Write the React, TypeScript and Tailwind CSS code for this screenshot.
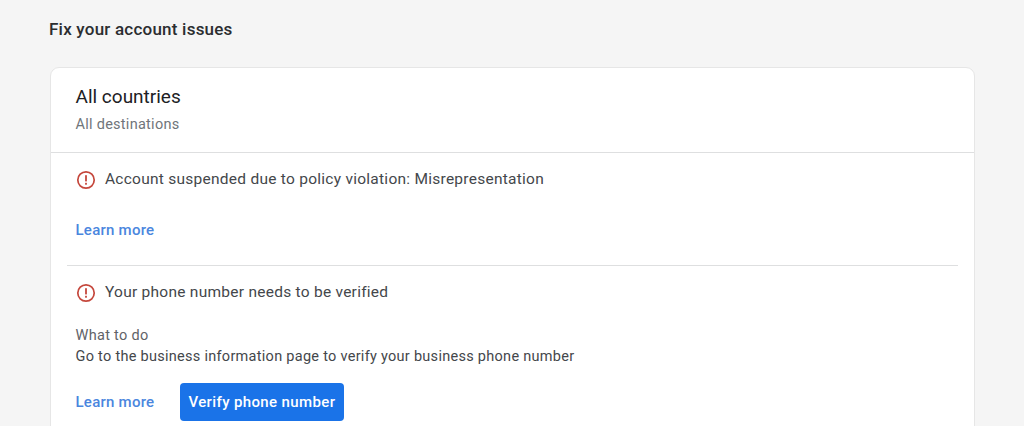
import React from "react";

function AlertIcon() {
  return (
    <svg width="20" height="20" viewBox="0 0 20 20" fill="none" className="shrink-0">
      <circle cx="10" cy="10" r="8.2" stroke="#c5473c" strokeWidth="1.7" />
      <rect x="9.1" y="5.2" width="1.8" height="6.2" fill="#c5473c" />
      <rect x="9.1" y="12.8" width="1.8" height="1.9" fill="#c5473c" />
    </svg>
  );
}

export default function App() {
  return (
    <div className="h-[426px] w-[1024px] overflow-hidden bg-[#f5f5f5] font-['Roboto',sans-serif]">
      <h1 className="pl-[49px] pt-[18px] text-[17px] leading-[22px] font-medium tracking-[0.22px] text-[#2b2d30]">Fix your account issues</h1>
      <div className="ml-[50px] mt-[27px] h-[400px] w-[925px] rounded-t-[9px] border border-[#e6e6e6] bg-white">
        <div className="h-[85px] border-b border-[#dedfe0] pl-[24.5px] pt-[17px]">
          <div className="text-[19px] leading-[24px] text-[#202124]">All countries</div>
          <div className="mt-[6px] text-[14.5px] leading-[20px] tracking-[0.27px] text-[#70757a]">All destinations</div>
        </div>
        <div className="mx-[16px] h-[113px] border-b border-[#dedfe0] pl-[9px] pt-[16px]">
          <div className="flex items-center gap-[9px]">
            <AlertIcon />
            <span className="pb-[2px] text-[15.5px] leading-[20px] tracking-[0.26px] text-[#44474b]">Account suspended due to policy violation: Misrepresentation</span>
          </div>
          <div className="mt-[28px] -ml-[0.5px] text-[15px] leading-[22px] font-medium tracking-[0.25px] text-[#4a86de]">Learn more</div>
        </div>
        <div className="pl-[24.5px] pt-[16px]">
          <div className="flex items-center gap-[9.5px]">
            <AlertIcon />
            <span className="pb-[2px] text-[15.5px] leading-[20px] tracking-[0.26px] text-[#44474b]">Your phone number needs to be verified</span>
          </div>
          <div className="mt-[21px] text-[14.5px] leading-[21px] tracking-[0.3px] text-[#5f6368]">What to do</div>
          <div className="text-[14.5px] leading-[21px] tracking-[0.28px] text-[#44474b]">Go to the business information page to verify your business phone number</div>
          <div className="mt-[16px] flex items-center gap-[25.5px]">
            <span className="text-[15px] font-medium tracking-[0.25px] text-[#4a86de]">Learn more</span>
            <button className="flex h-[38px] w-[164px] items-center justify-center rounded-[4px] bg-[#1a73e8] text-[15px] font-medium tracking-[0.37px] text-white">Verify phone number</button>
          </div>
        </div>
      </div>
    </div>
  );
}
